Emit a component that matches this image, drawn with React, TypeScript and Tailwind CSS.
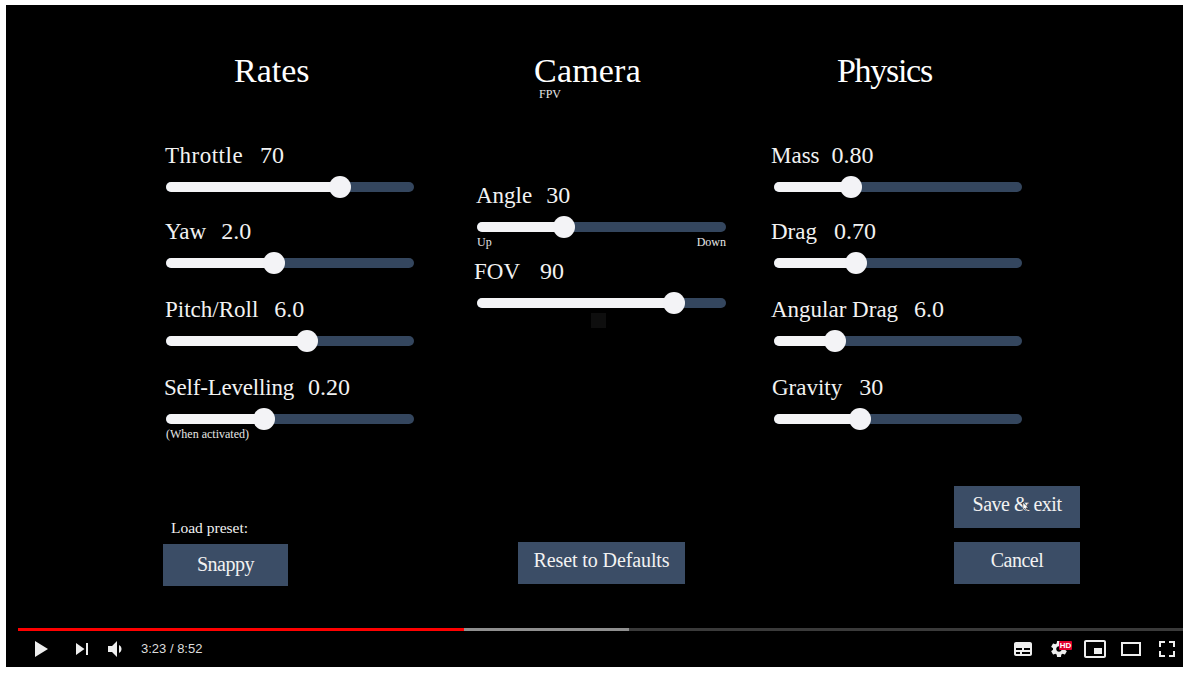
// App.tsx
import { FC, ReactNode } from "react";

const serif = "font-['Liberation_Serif',serif]";

interface SliderProps {
  label: string;
  value: string;
  pos: number;
  className?: string;
  labelClass?: string;
}

const Slider: FC<SliderProps> = ({ label, value, pos, className, labelClass }) => {
  return (
    <div className={className}>
      <div className={`flex h-[34px] items-baseline leading-[32px] text-[#f2f2f2] ${labelClass ?? ""}`}>
        <span className="text-[23px]">{label}</span>
        <span className="text-[24px] tracking-normal">{value}</span>
      </div>
      <div className="relative mt-[9px] h-[10px] rounded-full bg-[#34465e]">
        <div className="h-full rounded-full bg-[#f4f4f6]" style={{ width: pos }} />
        <div
          className="absolute top-[-6px] ml-[-11.5px] h-[22px] w-[22px] rounded-full bg-[#f3f3f6]"
          style={{ left: pos }}
        />
      </div>
    </div>
  );
};

const Btn: FC<{ text: string; className: string; children?: ReactNode }> = ({ text, className, children }) => (
  <button className={`relative h-[42px] bg-[#3b4d66] text-[20px] leading-none text-[#f2f2f2] ${className}`}>
    {text}
    {children}
  </button>
);

const Icon: FC<{ children: ReactNode }> = ({ children }) => (
  <svg viewBox="0 0 36 36" className="h-9 w-9 shrink-0" fill="#eeeeee" fillRule="evenodd">
    {children}
  </svg>
);

const PlayerBar: FC = () => {
  return (
    <div className="flex h-[39px] flex-col">
      <div className="ml-3 flex h-[3px] bg-[#3a3a3a]">
        <div className="w-[446px] bg-[#ff0000]" />
        <div className="w-[165px] bg-[#8f8f8f]" />
      </div>
      <div className="flex h-9 items-center pl-[17px]">
        <Icon>
          <path d="M12 26 18.5 22V14L12 10z M18.5 22 25 18 18.5 14z" />
        </Icon>
        <div className="ml-[5px]">
          <Icon>
            <path d="M12 24 20.5 18 12 12V24z M22 12v12h2V12h-2z" />
          </Icon>
        </div>
        <Icon>
          <path d="M8 21H12L17 26V10L12 15H8V21z" />
          <path d="M19 14V22C20.48 21.32 21.5 19.77 21.5 18C21.5 16.26 20.48 14.74 19 14z" />
        </Icon>
        <span className="ml-[5px] font-['Liberation_Sans',sans-serif] text-[13px] text-[#dddddd]">3:23 / 8:52</span>
        <div className="-mr-[2px] ml-auto flex">
          <Icon>
            <path d="M11 11C9.9 11 9 11.9 9 13V23C9 24.1 9.9 25 11 25H25C26.1 25 27 24.1 27 23V13C27 11.9 26.1 11 25 11H11z M11 17H17V19H11z M19 17H25V19H19z M11 21H15V23H11z M17 21H25V23H17z" />
          </Icon>
          <div className="relative">
            <Icon>
              <path d="m23.94 18.78c.03-.25.05-.51.05-.78 0-.27-.02-.52-.05-.78l1.68-1.32c.15-.12.19-.33.09-.51l-1.6-2.76c-.09-.17-.31-.24-.48-.17l-1.99.8c-.41-.32-.86-.58-1.35-.78l-.3-2.12c-.02-.19-.19-.33-.39-.33h-3.2c-.2 0-.36.14-.39.33l-.3 2.12c-.48.2-.93.47-1.35.78l-1.99-.8c-.18-.07-.39 0-.48.17l-1.6 2.76c-.1.17-.05.39.09.51l1.68 1.32c-.03.25-.05.52-.05.78 0 .26.02.52.05.78l-1.68 1.32c-.15.12-.19.33-.09.51l1.6 2.76c.09.17.31.24.48.17l1.99-.8c.41.32.86.58 1.35.78l.3 2.12c.02.19.19.33.39.33h3.2c.2 0 .36-.14.39-.33l.3-2.12c.48-.2.93-.47 1.35-.78l1.99.8c.18.07.39 0 .48-.17l1.6-2.76c.09-.17.05-.39-.09-.51l-1.68-1.32zm-5.94 2.01c-1.54 0-2.8-1.25-2.8-2.8 0-1.54 1.25-2.8 2.8-2.8 1.54 0 2.8 1.25 2.8 2.8 0 1.54-1.25 2.8-2.8 2.8z" />
            </Icon>
            <span className="absolute left-[18px] top-[10px] flex h-[9px] w-[13px] items-center justify-center rounded-[1px] bg-[#e1002d] font-['Liberation_Sans',sans-serif] text-[8px] font-bold leading-none text-white">
              HD
            </span>
          </div>
          <Icon>
            <path d="M25 17H17V23H25V17z M29 25V10.98C29 9.88 28.1 9 27 9H9C7.9 9 7 9.88 7 10.98V25C7 26.1 7.9 27 9 27H27C28.1 27 29 26.1 29 25z M27 25.02H9V10.97H27V25.02z" />
          </Icon>
          <Icon>
            <path d="M28 11V25H8V11z M10 13H26V23H10z" />
          </Icon>
          <Icon>
            <path d="M10 16H12V12H16V10H10z M20 10V12H24V16H26V10z M24 24H20V26H26V20H24z M12 20H10V26H16V24H12z" />
          </Icon>
        </div>
      </div>
    </div>
  );
};

export default function App() {
  return (
    <div className={`h-[674px] w-[1189px] overflow-hidden bg-white pl-[6px] pt-[5px] ${serif}`}>
      <div className="flex h-[662px] w-[1177px] flex-col justify-between bg-black">
        <div>
          <div className="flex h-[481px] pl-[160px] pt-[43px]">
            <div className="w-[248px]">
              <h2 className="h-[44px] pl-[68px] text-[34px] leading-[46px] text-white">Rates</h2>
              <Slider label="Throttle" value="70" pos={174} className="mt-[47px]" labelClass="-ml-px gap-[17px] tracking-[0.5px]" />
              <Slider label="Yaw" value="2.0" pos={108} className="mt-[23px]" labelClass="-ml-px gap-[15px]" />
              <Slider label="Pitch/Roll" value="6.0" pos={141} className="mt-[25px]" labelClass="-ml-px gap-[16px]" />
              <Slider label="Self-Levelling" value="0.20" pos={98} className="mt-[25px]" labelClass="-ml-[2px] gap-[14px] tracking-[-0.2px]" />
              <p className="mt-[3px] text-[12px] leading-[14px] text-[#e6e6e6]">(When activated)</p>
            </div>
            <div className="ml-[63px] w-[249px]">
              <h2 className="h-[44px] pl-[57px] text-[34px] leading-[46px] tracking-[0.2px] text-white">Camera</h2>
              <p className="-mt-[5px] pl-[62px] text-[12px] leading-[14px] text-[#e6e6e6]">FPV</p>
              <Slider label="Angle" value="30" pos={87} className="mt-[78px]" labelClass="-ml-px gap-[14px]" />
              <div className="mt-[3px] flex justify-between text-[12px] leading-[14px] text-[#e6e6e6]">
                <span>Up</span>
                <span>Down</span>
              </div>
              <Slider label="FOV" value="90" pos={197} className="mt-[6px]" labelClass="-ml-[3px] gap-[20px]" />
              <div className="ml-[114px] mt-[5px] h-[15px] w-[15px] bg-[#0e0e0e]" />
            </div>
            <div className="ml-[48px] w-[248px]">
              <h2 className="h-[44px] pl-[63px] text-[34px] leading-[46px] tracking-[-1.3px] text-white">Physics</h2>
              <Slider label="Mass" value="0.80" pos={77} className="mt-[47px]" labelClass="-ml-[3px] gap-[12px]" />
              <Slider label="Drag" value="0.70" pos={82} className="mt-[23px]" labelClass="-ml-[3px] gap-[17px]" />
              <Slider label="Angular Drag" value="6.0" pos={61} className="mt-[25px]" labelClass="-ml-[3px] gap-[16px]" />
              <Slider label="Gravity" value="30" pos={86} className="mt-[25px]" labelClass="-ml-[2px] gap-[17px]" />
            </div>
          </div>
          <div className="flex items-end pl-[157px] text-white">
            <div className="w-[125px]">
              <p className="mb-[7px] pl-[8px] text-[15.5px] leading-[18px] text-[#f2f2f2]">Load preset:</p>
              <Btn text="Snappy" className="w-[125px] pb-[2px] tracking-[-0.5px]" />
            </div>
            <Btn text="Reset to Defaults" className="mb-[2px] ml-[230px] w-[167px] pb-[6px] tracking-[-0.1px]" />
            <div className="mb-[2px] ml-[269px] flex flex-col gap-[14px]">
              <Btn text="Save & exit" className="w-[126px] pb-[7px] tracking-[-0.5px]">
                <svg viewBox="0 0 8 12" className="absolute left-[68px] top-[15px] h-[11px] w-[7px]" fill="#ffffff" stroke="#111111" strokeWidth="0.6">
                  <path d="M1 1V10L3.2 8 4.8 11 6 10.4 4.6 7.6H7.4z" />
                </svg>
              </Btn>
              <Btn text="Cancel" className="w-[126px] pb-[7px] tracking-[-0.5px]" />
            </div>
          </div>
        </div>
        <PlayerBar />
      </div>
    </div>
  );
}
